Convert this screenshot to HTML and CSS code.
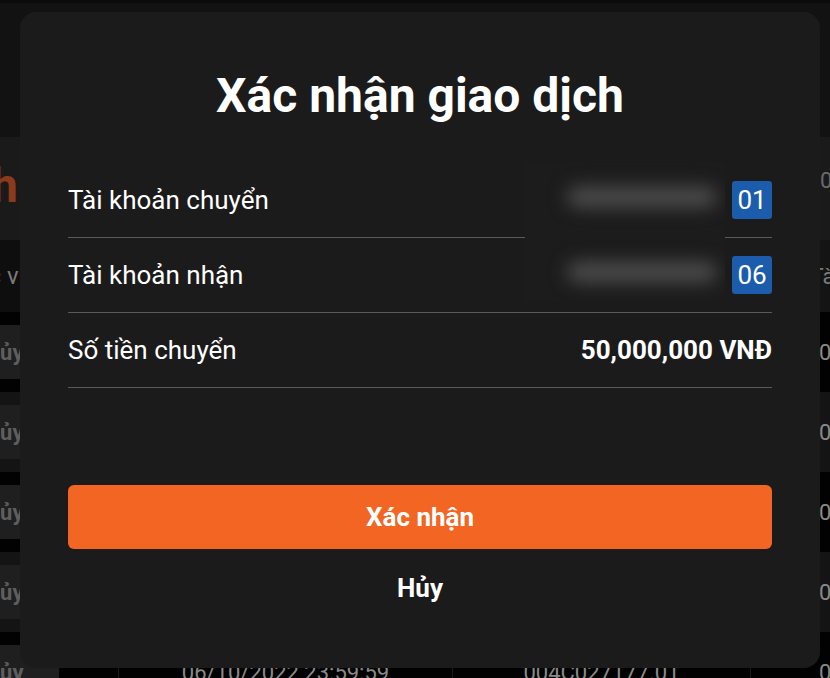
FILE: index.html
```html
<!DOCTYPE html>
<html lang="vi">
<head>
  <meta charset="UTF-8">
  <meta name="viewport" content="width=device-width, initial-scale=1.0">
  <title>Xác nhận giao dịch</title>
  <link rel="stylesheet" href="styles.css">
</head>
<body>
  <div class="page">
    <header class="topbar"></header>
    <section class="page-title">
      <h2>Lịch sử giao dịch</h2>
      <span class="filter">09/10/2022</span>
    </section>
    <div class="table-wrap">
      <table class="history">
        <thead>
          <tr>
            <th class="col-action">Tác vụ</th>
            <th class="col-time">Thời gian</th>
            <th class="col-ref">Mã giao dịch</th>
            <th class="col-acct">Tài khoản</th>
          </tr>
        </thead>
        <tbody>
          <tr>
            <td class="col-action"><span class="row-btn">Hủy</span></td>
            <td>06/10/2022 23:59:59</td>
            <td>004C027181.01</td>
            <td class="col-acct">0401</td>
          </tr>
          <tr>
            <td class="col-action"><span class="row-btn">Hủy</span></td>
            <td>06/10/2022 23:59:59</td>
            <td>004C027180.01</td>
            <td class="col-acct">0401</td>
          </tr>
          <tr>
            <td class="col-action"><span class="row-btn">Hủy</span></td>
            <td>06/10/2022 23:59:59</td>
            <td>004C027179.01</td>
            <td class="col-acct">0401</td>
          </tr>
          <tr>
            <td class="col-action"><span class="row-btn">Hủy</span></td>
            <td>06/10/2022 23:59:59</td>
            <td>004C027178.01</td>
            <td class="col-acct">0401</td>
          </tr>
          <tr>
            <td class="col-action"><span class="row-btn">Hủy</span></td>
            <td>06/10/2022 23:59:59</td>
            <td>004C027177.01</td>
            <td class="col-acct">0041</td>
          </tr>
        </tbody>
      </table>
    </div>
  </div>

  <div class="overlay">
    <div class="modal">
      <h1>Xác nhận giao dịch</h1>

      <div class="details">
        <div class="row">
          <span class="label">Tài khoản chuyển</span>
          <span class="value"><span class="badge">01</span></span>
        </div>
        <div class="row">
          <span class="label">Tài khoản nhận</span>
          <span class="value"><span class="badge">06</span></span>
        </div>
        <div class="row">
          <span class="label">Số tiền chuyển</span>
          <span class="value amount">50,000,000 VNĐ</span>
        </div>

        <!-- số tài khoản bị che -->
        <div class="redact">
          <span class="blur-bar"></span>
          <span class="blur-bar"></span>
        </div>
      </div>

      <div class="actions">
        <button type="button" class="btn-confirm">Xác nhận</button>
        <button type="button" class="btn-cancel">Hủy</button>
      </div>
    </div>
  </div>
</body>
</html>
```

FILE: styles.css
```css
body {
  margin: 0;
  height: 678px;
  background: #0b0b0b;
  font-family: Roboto, "Liberation Sans", sans-serif;
  overflow: hidden;
}

/* trang phía sau */
.page {
  height: 675px;
  padding-top: 3px;
  overflow: hidden;
}
.topbar {
  height: 134px;
  background: #121212;
}
.page-title {
  height: 103px;
  background: #1a1a1a;
  display: flex;
  justify-content: space-between;
  align-items: center;
}
.page-title h2 {
  margin: 0;
  width: 18px;
  display: flex;
  justify-content: flex-end;
  overflow: hidden;
  white-space: nowrap;
  font-size: 48px;
  font-weight: 700;
  color: #8b3a1c;
  padding-bottom: 6px;
}
.filter {
  width: 10px;
  overflow: hidden;
  white-space: nowrap;
  color: #6a6a6a;
  font-size: 22px;
  margin-bottom: 16px;
}
.table-wrap {
  overflow: hidden;
}
.history {
  margin-left: -60px;
  border-collapse: collapse;
  table-layout: fixed;
  width: 950px;
  color: #8a8a8a;
  font-size: 22px;
}
.history th,
.history td {
  box-sizing: border-box;
  padding: 0;
  white-space: nowrap;
}
.history th {
  height: 72px;
  background: #0e0e0e;
  font-weight: 400;
  color: #7a7a7a;
}
.history th.col-action {
  text-align: left;
  padding-left: 22px;
  font-size: 24px;
}
.history td {
  height: 80px;
  text-align: center;
  border-left: 1px solid #1c1c1c;
}
.history tbody tr:nth-child(odd) {
  background: #020202;
}
.history tbody tr:nth-child(even) {
  background: #141414;
}
.history .col-acct {
  text-align: left;
  padding-left: 68px;
}
.history th.col-acct {
  padding-left: 60px;
  background: #141414;
}
.col-action {
  width: 178px;
}
.col-time {
  width: 334px;
}
.col-ref {
  width: 298px;
}
.row-btn {
  display: flex;
  align-items: center;
  justify-content: center;
  width: 110px;
  height: 54px;
  margin-left: 8px;
  background: #1f1f1f;
  color: #5e5e5e;
  font-weight: 700;
}

/* hộp thoại */
.overlay {
  position: fixed;
  inset: 0;
}
.modal {
  position: absolute;
  top: 12px;
  left: 20px;
  width: 800px;
  height: 656px;
  box-sizing: border-box;
  padding: 0 48px;
  background: #1b1b1b;
  border-radius: 16px;
  color: #fff;
}
.modal h1 {
  margin: 0 0 39px;
  padding-top: 56px;
  line-height: 56px;
  font-size: 48px;
  font-weight: 700;
  text-align: center;
}
.details {
  position: relative;
}
.row {
  height: 74px;
  display: flex;
  align-items: center;
  justify-content: space-between;
  border-bottom: 1px solid #5a5a5a;
}
.label {
  font-size: 26px;
}
.value {
  display: flex;
  align-items: center;
}
.badge {
  width: 40px;
  height: 38px;
  display: flex;
  align-items: center;
  justify-content: center;
  background: #1b5cad;
  border-radius: 3px;
  font-size: 26px;
}
.amount {
  font-size: 26px;
  font-weight: 700;
}
.redact {
  position: absolute;
  top: 0;
  right: 47px;
  width: 200px;
  height: 138px;
  background: #1c1c1c;
  display: flex;
  flex-direction: column;
  align-items: flex-end;
  overflow: hidden;
}
.blur-bar {
  display: block;
  width: 150px;
  height: 20px;
  margin-right: 8px;
  margin-top: 24px;
  background: #4e4e4e;
  border-radius: 10px;
  filter: blur(9px);
}
.blur-bar + .blur-bar {
  margin-top: 55px;
}
.actions {
  margin-top: 97px;
  display: flex;
  flex-direction: column;
}
.btn-confirm {
  height: 64px;
  border: none;
  border-radius: 6px;
  background: #f26522;
  color: #fff;
  font-family: inherit;
  font-size: 26px;
  font-weight: 700;
}
.btn-cancel {
  height: 78px;
  border: none;
  background: none;
  color: #fff;
  font-family: inherit;
  font-size: 26px;
  font-weight: 700;
}
```
